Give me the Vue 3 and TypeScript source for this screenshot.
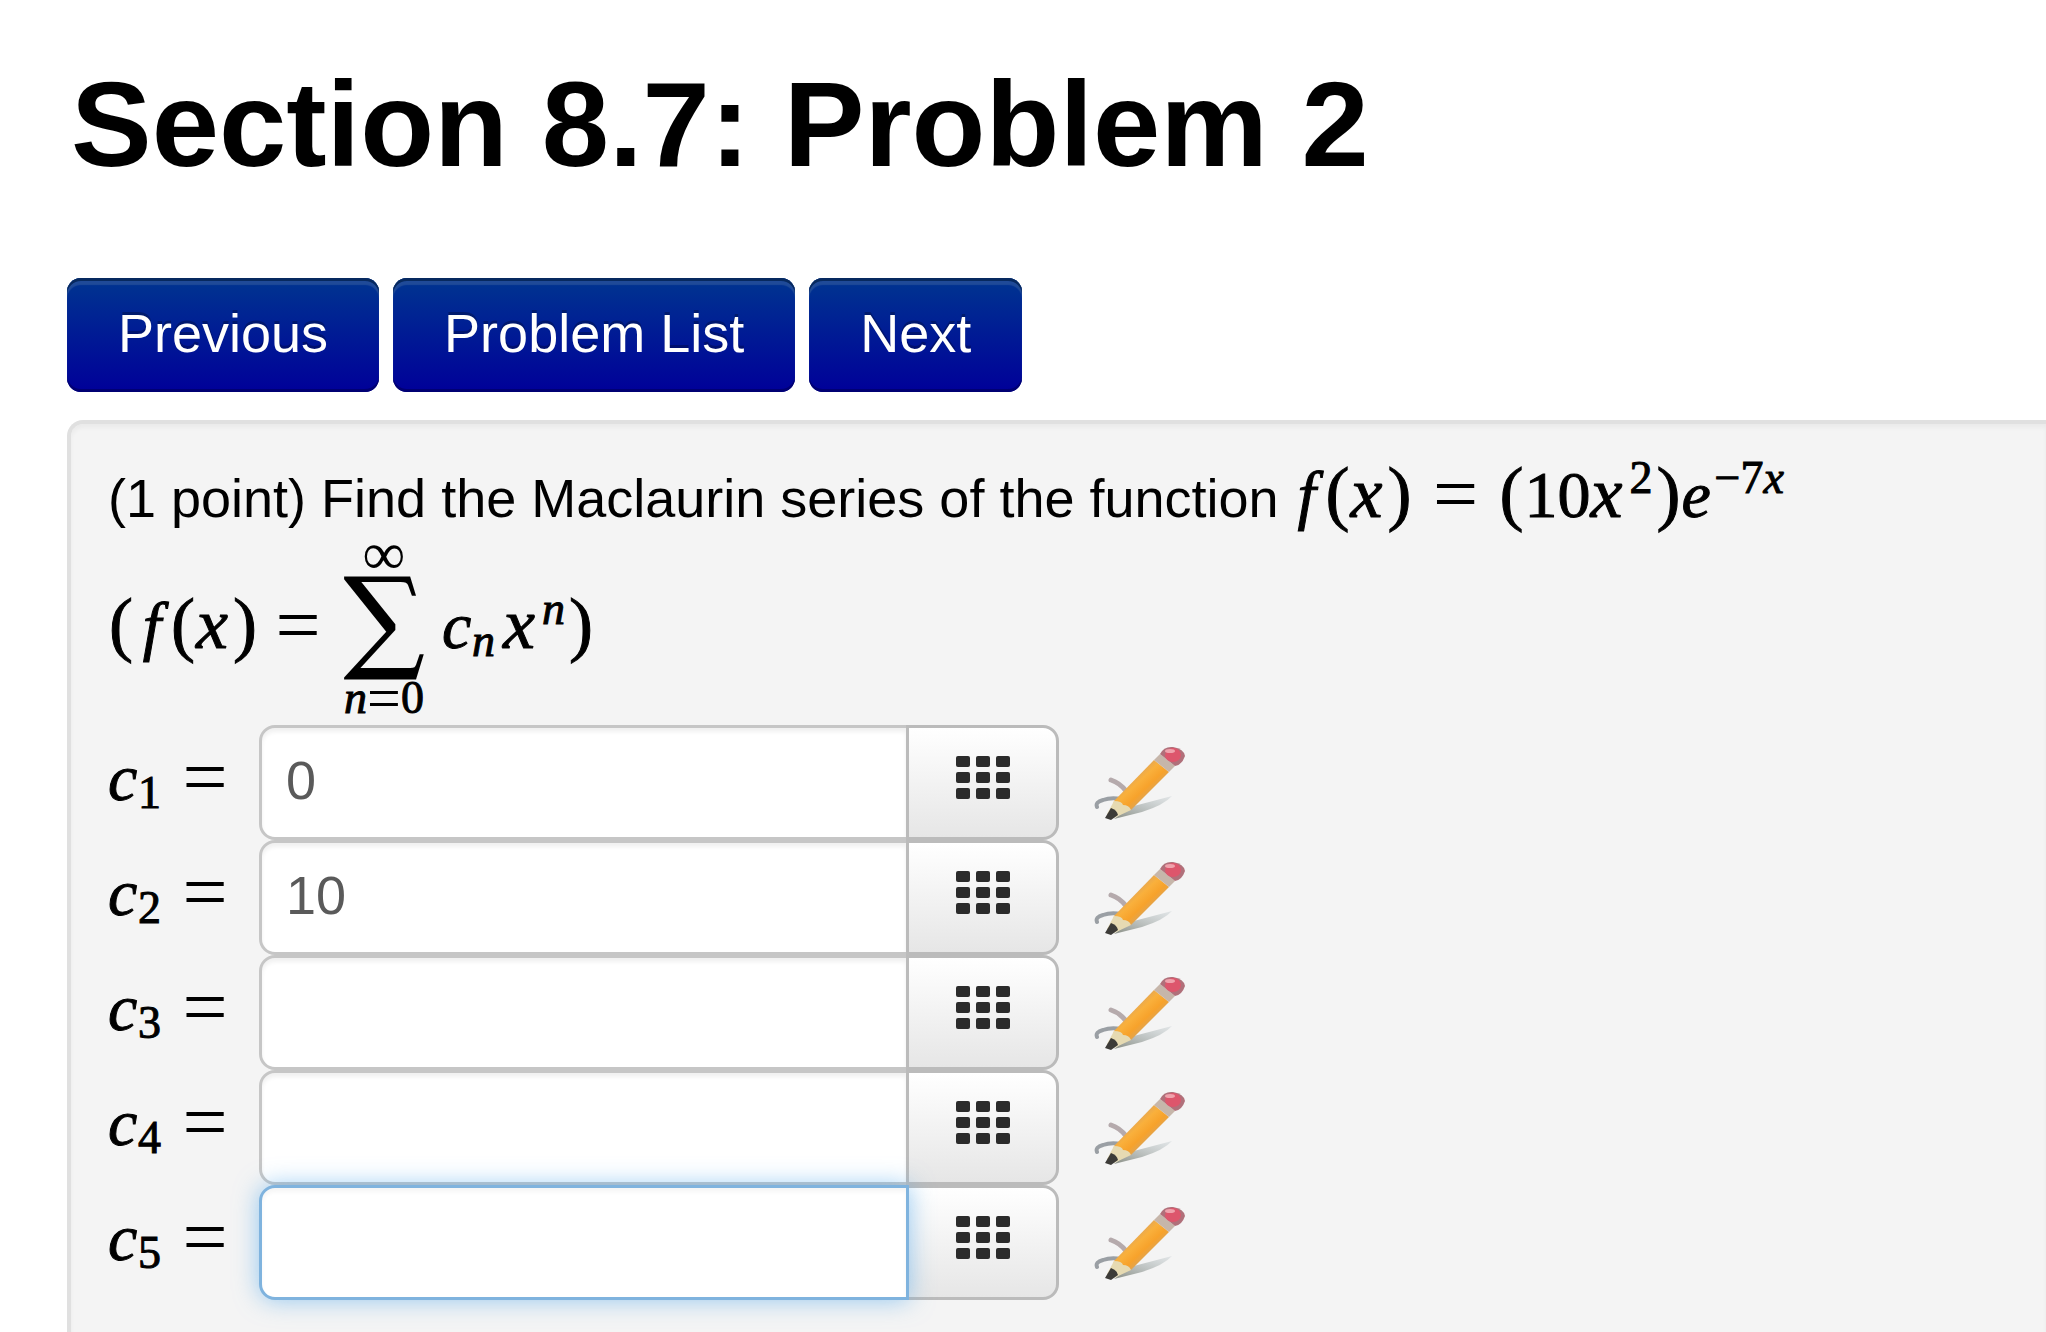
<script setup lang="ts">
import { ref } from 'vue'

interface Answer {
  index: number
  value: string
}

const nav: string[] = ['Previous', 'Problem List', 'Next']
const activeIndex = ref(5)
const answers = ref<Answer[]>([
  { index: 1, value: '0' },
  { index: 2, value: '10' },
  { index: 3, value: '' },
  { index: 4, value: '' },
  { index: 5, value: '' },
])
const tiles = [0, 1, 2].flatMap((row) => [0, 1, 2].map((col) => ({ x: col * 20, y: row * 16 })))
</script>

<template>
  <main class="page">
    <h1 class="title">Section 8.7: Problem 2</h1>

    <nav class="nav" aria-label="Problem navigation">
      <button v-for="item in nav" :key="item" type="button" class="nav-button">{{ item }}</button>
    </nav>

    <section class="panel">
      <p class="prompt">
        <span class="words">(1 point) Find the Maclaurin series of the function</span>
        <span class="math">
          <i class="f">f</i><span class="paren">(</span><i class="x">x</i><span class="paren">)</span>
          <span class="equals">=</span>
          <span class="paren">(</span><span>10</span><i class="x">x</i><span class="small raised">2</span><span class="paren">)</span><i class="e">e</i><span class="small raised">−7<i>x</i></span>
        </span>
      </p>

      <p class="series">
        <span class="math">
          <span class="paren">(</span><i class="f">f</i><span class="paren">(</span><i class="x">x</i><span class="paren">)</span>
          <span class="equals">=</span>
        </span>
        <span class="sum">
          <span class="limit upper">∞</span>
          <span class="sigma">∑</span>
          <span class="limit"><i>n</i><span class="limit-equals">=</span>0</span>
        </span>
        <span class="math">
          <i class="c">c</i><i class="small lowered">n</i><i class="x">x</i><i class="small raised">n</i><span class="paren">)</span>
        </span>
      </p>

      <form class="answers" @submit.prevent>
        <div v-for="answer in answers" :key="answer.index" class="row">
          <label class="math label" :for="`answer-${answer.index}`">
            <i class="c">c</i><span class="small lowered">{{ answer.index }}</span><span class="equals">=</span>
          </label>
          <input
            :id="`answer-${answer.index}`"
            v-model="answer.value"
            type="text"
            autocomplete="off"
            class="field"
            :class="{ active: answer.index === activeIndex }"
            @focus="activeIndex = answer.index"
          />
          <button type="button" class="keypad" aria-label="Open keypad">
            <svg width="54" height="43" viewBox="0 0 54 43" aria-hidden="true">
              <rect v-for="(tile, i) in tiles" :key="i" :x="tile.x" :y="tile.y" width="14" height="11" rx="2" fill="#2b2b2b" />
            </svg>
          </button>
          <button type="button" class="pencil" aria-label="Edit equation">
            <svg width="92" height="76" viewBox="0 0 92 76" aria-hidden="true">
              <defs>
                <linearGradient id="wood" x1="0" y1="0" x2="1" y2="1">
                  <stop offset="0.3" stop-color="#d9a262" />
                  <stop offset="0.44" stop-color="#f9b03c" />
                  <stop offset="0.56" stop-color="#f7a22b" />
                  <stop offset="0.7" stop-color="#d3a566" />
                </linearGradient>
                <linearGradient id="shade" x1="0" y1="1" x2="1" y2="0">
                  <stop offset="0" stop-color="#6f7468" stop-opacity="0.8" />
                  <stop offset="1" stop-color="#a9b7bd" stop-opacity="0.25" />
                </linearGradient>
              </defs>
              <path d="M20 74 L36 62 L78 51 Q70 60 48 67 Z" fill="url(#shade)" />
              <path d="M3 62 Q1 57 9 55 Q17 52 27 54" fill="none" stroke="#9a9fa4" stroke-width="4" stroke-linecap="round" />
              <path d="M17 35 Q26 38 32 46" fill="none" stroke="#b5aaac" stroke-width="5" stroke-linecap="round" />
              <path d="M20 56 L60 15 L75 27 L37 65 L24 68 L18 65 Z" fill="url(#wood)" />
              <path d="M20 56 Q28 56 29 60 Q35 60 37 65 L20 73 L13 69 Z" fill="#e6dab2" />
              <path d="M17 63 Q23 65 24 70 L17 75 L11 73 Z" fill="#3c3b38" />
              <path d="M60 15 L66 9 L81 21 L75 27 Z" fill="#c6b6aa" />
              <path d="M66 9 Q70 1 79 2 Q90 4 91 11 Q88 20 81 21 Z" fill="#b0707a" />
              <ellipse cx="79" cy="10" rx="8" ry="7" fill="#dd566c" />
              <ellipse cx="76" cy="6" rx="5" ry="2" fill="#efa2ac" />
            </svg>
          </button>
        </div>
      </form>
    </section>
  </main>
</template>

<style>
body {
  margin: 0;
  background: #fff;
}
</style>

<style scoped>
.page {
  display: flex;
  flex-direction: column;
  box-sizing: border-box;
  min-height: 100vh;
  padding: 54px 0 0 67px;
  overflow: hidden;
  color: #000;
  font-family: "Liberation Sans", Arial, sans-serif;
  font-size: 54px;
}

.title {
  margin: 0;
  padding-left: 4px;
  font-size: 121px;
  line-height: 140px;
  font-weight: 700;
}

.nav {
  display: flex;
  gap: 14px;
  margin-top: 84px;
}

.nav-button {
  box-sizing: border-box;
  height: 114px;
  padding: 0 51px 4px;
  border: 0;
  border-radius: 14px;
  background: linear-gradient(#003590, #000099);
  box-shadow: inset 0 3px 0 #07295f, inset 0 7px 1px #1f4a98, inset 0 -3px 0 #000073;
  color: #fff;
  font: inherit;
  text-shadow: 0 -3px 0 rgba(0, 0, 0, 0.25);
}

.panel {
  flex: 1;
  margin-top: 28px;
  padding: 33px 0 26px 37px;
  border: solid #e0e0e0;
  border-width: 4px 0 0 4px;
  border-radius: 16px 0 0 0;
  background: #f4f4f4;
  box-shadow: inset 0 4px 4px rgba(0, 0, 0, 0.04);
}

.prompt,
.series {
  display: flex;
  margin: 0;
}

.prompt {
  align-items: baseline;
  gap: 10px;
  height: 80px;
  line-height: 80px;
}

.series {
  align-items: center;
  height: 188px;
}

.math,
.sum {
  font-family: "Liberation Serif", "Times New Roman", serif;
  -webkit-text-stroke: 1px currentColor;
}

.math {
  display: inline-flex;
  align-items: baseline;
  font-size: 66px;
  line-height: 76px;
}

.series .math,
.label {
  padding-bottom: 10px;
}

.f {
  width: 36px;
  text-align: center;
}

.x {
  width: 36px;
  font-size: 72px;
  line-height: 60px;
}

.c,
.e {
  width: 30px;
}

.paren {
  width: 26px;
  font-size: 72px;
  line-height: 60px;
  text-align: center;
}

.equals {
  position: relative;
  top: 4px;
  width: 86px;
  font-size: 80px;
  line-height: 40px;
  text-align: center;
  -webkit-text-stroke: 0;
}

.series .equals {
  width: 80px;
}

.small {
  position: relative;
  font-size: 46px;
  line-height: 40px;
}

.raised {
  top: -24px;
  margin: 0 3px;
}

.lowered {
  top: 8px;
  margin-right: 8px;
}

.sum {
  display: flex;
  flex-direction: column;
  align-items: center;
  width: 92px;
  margin-right: 12px;
  padding-bottom: 10px;
}

.sigma {
  font-family: "DejaVu Math TeX Gyre", "Liberation Serif", serif;
  font-size: 98px;
  line-height: 104px;
  -webkit-text-stroke: 0;
}

.limit {
  display: flex;
  font-size: 46px;
  line-height: 40px;
}

.upper,
.limit-equals {
  font-size: 60px;
  -webkit-text-stroke: 0;
}

.row {
  display: flex;
  align-items: center;
  height: 115px;
}

.label {
  width: 151px;
}

.label .equals {
  width: 72px;
}

.field {
  box-sizing: border-box;
  width: 650px;
  height: 115px;
  padding: 0 24px 6px;
  border: 3px solid #c6c6c6;
  border-radius: 16px 0 0 16px;
  outline: 0;
  background: #fff;
  box-shadow: inset 0 4px 4px rgba(0, 0, 0, 0.06);
  color: #5a5a5a;
  font: inherit;
}

.field.active {
  position: relative;
  z-index: 1;
  border-color: #7fb3de;
  box-shadow: inset 0 4px 4px rgba(0, 0, 0, 0.04), 0 0 24px rgba(82, 168, 236, 0.6);
}

.keypad {
  display: flex;
  align-items: center;
  justify-content: center;
  box-sizing: border-box;
  width: 153px;
  height: 115px;
  margin-left: -3px;
  padding: 0 0 10px;
  border: 3px solid #bbb;
  border-radius: 0 16px 16px 0;
  background: linear-gradient(#fff, #e6e6e6);
}

.pencil {
  display: flex;
  margin-left: 35px;
  padding: 0;
  border: 0;
  background: none;
}
</style>
